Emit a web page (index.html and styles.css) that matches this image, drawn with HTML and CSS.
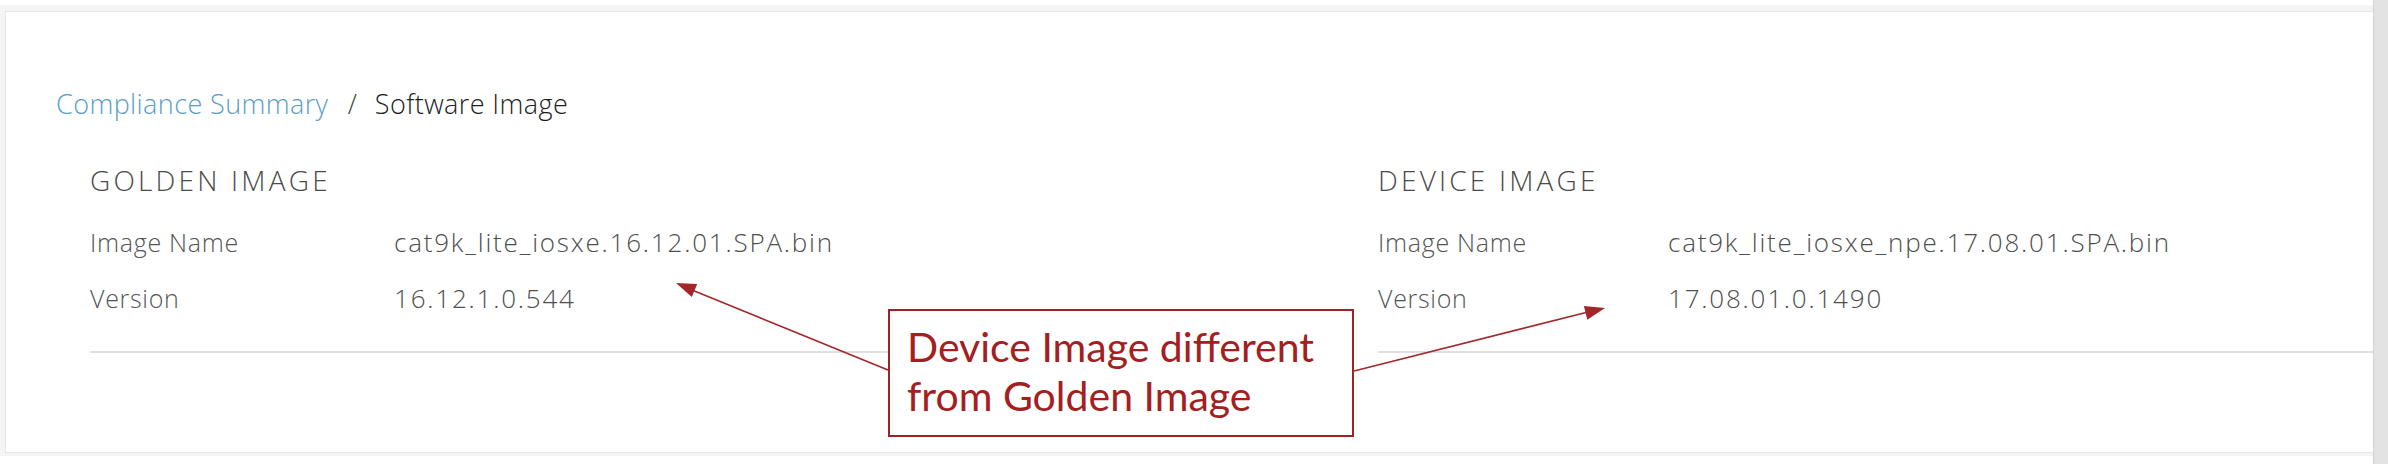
FILE: index.html
```html
<!DOCTYPE html>
<html lang="en">

<head>
    <meta charset="UTF-8">
    <title>Software Image Compliance</title>
    <link rel="stylesheet" href="styles.css">
</head>

<body>
    <div class="viewport">
        <div class="frame">
            <div class="card">
                <div class="breadcrumb">
                    <a class="crumb-link" href="#">Compliance Summary</a>
                    <span class="crumb-sep">/</span>
                    <span class="crumb-current">Software Image</span>
                </div>
                <div class="compare">
                    <div class="panel panel-golden">
                        <div class="panel-title">GOLDEN IMAGE</div>
                        <div class="kv">
                            <div class="kv-label">Image Name</div>
                            <div class="kv-value">cat9k_lite_iosxe.16.12.01.SPA.bin</div>
                            <div class="kv-label">Version</div>
                            <div class="kv-value">16.12.1.0.544</div>
                        </div>
                    </div>
                    <div class="panel panel-device">
                        <div class="panel-title">DEVICE IMAGE</div>
                        <div class="kv">
                            <div class="kv-label">Image Name</div>
                            <div class="kv-value">cat9k_lite_iosxe_npe.17.08.01.SPA.bin</div>
                            <div class="kv-label">Version</div>
                            <div class="kv-value">17.08.01.0.1490</div>
                        </div>
                    </div>
                </div>
            </div>
        </div>
    </div>
    <div class="scroll-track"></div>

    <!-- callout overlay -->
    <svg class="arrows" width="2388" height="464" viewBox="0 0 2388 464">
        <line x1="888" y1="370" x2="692" y2="290" stroke="#a3272a" stroke-width="1.6" />
        <polygon points="676,283 697.2,284.1 691.8,297.1" fill="#a3272a" />
        <line x1="1354" y1="371" x2="1588" y2="312" stroke="#a3272a" stroke-width="1.6" />
        <polygon points="1605,308 1587.3,319.7 1583.9,306.1" fill="#a3272a" />
    </svg>
    <div class="callout">Device Image different<br>from Golden Image</div>
</body>

</html>
```

FILE: styles.css
```css
body {
    margin: 0;
    padding: 0;
    height: 464px;
    background: #fff;
    font-family: "Open Sans", Roboto, "Liberation Sans", sans-serif;
    font-weight: 300;
    display: flex;
    overflow: hidden;
}

.viewport {
    flex: 1;
    padding-top: 5px;
}

.frame {
    background: #f4f4f4;
    padding: 6px 0 3px 5px;
}

.card {
    background: white;
    border: 1px solid #e6e6e6;
    border-right: none;
    height: 442px;
    box-sizing: border-box;
}

.breadcrumb {
    padding: 74px 0 0 50px;
    font-size: 27px;
    line-height: 36px;
    letter-spacing: 0.4px;
}

.crumb-link {
    color: #5b9ec4;
    text-decoration: none;
}

.crumb-sep {
    color: #444;
    margin: 0 10px 0 12px;
}

.crumb-current {
    color: #1e1e1e;
}

.compare {
    display: grid;
    grid-template-columns: 1240px 1fr;
    column-gap: 48px;
    padding: 40px 0 0 84px;
}

.panel {
    border-bottom: 2px solid #e0e0e0;
    padding-bottom: 35px;
}

.panel-title {
    font-size: 28px;
    line-height: 36px;
    color: #4a4a4a;
    letter-spacing: 3.2px;
    margin-bottom: 26px;
}

.kv {
    display: grid;
    grid-template-columns: 304px 1fr;
    row-gap: 20px;
    font-size: 25px;
    line-height: 36px;
    letter-spacing: 0.7px;
}

.panel-device .kv {
    grid-template-columns: 290px 1fr;
}

.kv-label {
    color: #555;
}

.kv-value {
    color: #4e4e4e;
    font-size: 26px;
    letter-spacing: 1.8px;
}

.scroll-track {
    width: 14px;
    background: #e3e3e3;
    border-left: 1px solid #d2d2d2;
}

.arrows {
    position: absolute;
    top: 0;
    left: 0;
}

.callout {
    position: absolute;
    left: 888px;
    top: 309px;
    width: 466px;
    height: 128px;
    box-sizing: border-box;
    border: 2px solid #9f2323;
    background: white;
    padding: 11px 0 0 17px;
    font-family: Lato, "Open Sans", sans-serif;
    font-weight: 400;
    font-size: 41px;
    line-height: 49px;
    color: #a3201f;
}
```
